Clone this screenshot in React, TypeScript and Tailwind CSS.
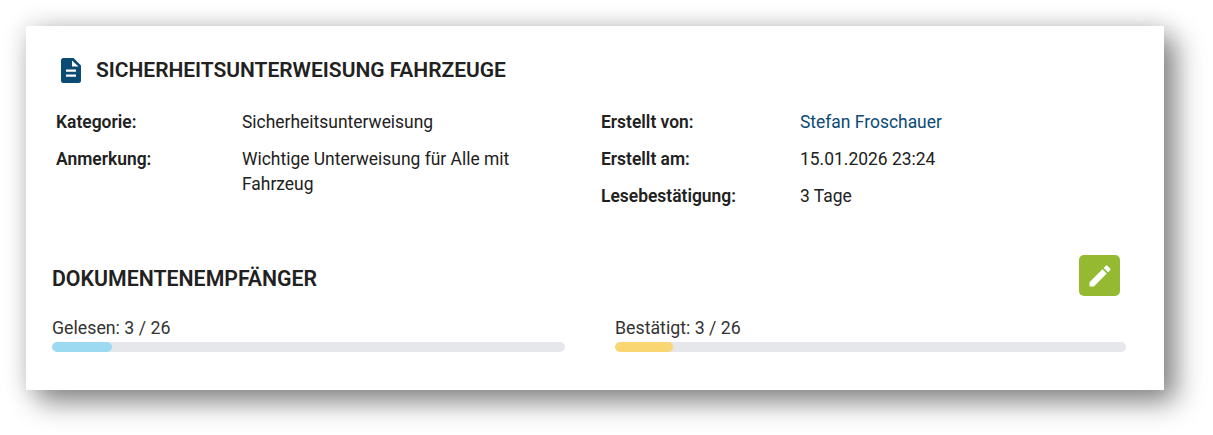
import React from "react";

function Row({ label, children, w, className = "" }: { label: string; children: React.ReactNode; w: string; className?: string }) {
  return (
    <div className={`flex ${className}`}>
      <div className={`${w} shrink-0 font-semibold`}>{label}</div>
      <div>{children}</div>
    </div>
  );
}

function Bar({ label, fill, w }: { label: string; fill: string; w: string }) {
  return (
    <div className={w}>
      <div className="h-[25px] leading-[25px] text-[17.75px] text-[#333]">{label}</div>
      <div className="h-[10px] rounded-full bg-[#e5e7eb] overflow-hidden mt-[1px]">
        <div className={`h-full rounded-full ${fill}`} />
      </div>
    </div>
  );
}

export default function App() {
  return (
    <div className="w-[1213px] h-[435px] bg-white pt-[26px] pl-[26px] overflow-hidden font-['Roboto',sans-serif] text-[17.45px] leading-[25px] text-[#212121]">
      <div className="w-[1138px] h-[364px] bg-white px-[26px] pt-[30px] shadow-[12px_12px_26px_rgba(0,0,0,0.45),0_0_24px_rgba(0,0,0,0.14)]">
        <div className="flex items-center h-[28px] ml-[9px] gap-[15px]">
          <svg viewBox="0 0 20 25" className="w-[20px] h-[25px] text-[#0b4a75]" fill="currentColor" fillRule="evenodd">
            <path d="M2.5 0H12.5L20 7.5V22.5A2.5 2.5 0 0 1 17.5 25H2.5A2.5 2.5 0 0 1 0 22.5V2.5A2.5 2.5 0 0 1 2.5 0ZM11 2.5V8.5H17.5ZM5 11.5V13.7H15V11.5ZM5 16.5V18.7H15V16.5Z" />
          </svg>
          <h1 className="text-[21px] font-semibold tracking-[-0.03px]">SICHERHEITSUNTERWEISUNG FAHRZEUGE</h1>
        </div>
        <div className="flex mt-[26px] ml-[4px]">
          <div className="w-[545px] flex flex-col gap-[12px]">
            <Row label="Kategorie:" w="w-[186px]">Sicherheitsunterweisung</Row>
            <Row label="Anmerkung:" w="w-[186px]">
              <div className="w-[290px]">Wichtige Unterweisung für Alle mit Fahrzeug</div>
            </Row>
          </div>
          <div className="flex flex-col gap-[12px]">
            <Row label="Erstellt von:" w="w-[199px]"><span className="text-[#0b4a75]">Stefan Froschauer</span></Row>
            <Row label="Erstellt am:" w="w-[199px]">15.01.2026 23:24</Row>
            <Row label="Lesebestätigung:" w="w-[199px]">3 Tage</Row>
          </div>
        </div>
        <div className="flex items-start justify-between mt-[46px] mr-[18px]">
          <h2 className="text-[21.3px] font-semibold pt-[11px]">DOKUMENTENEMPFÄNGER</h2>
          <button className="w-[41px] h-[41px] rounded-[5px] bg-[#95ba32] flex items-center justify-center">
            <svg viewBox="0 0 24 24" className="w-[28px] h-[28px] text-white" fill="currentColor">
              <path d="M3 17.25V21h3.75L17.81 9.94l-3.75-3.75L3 17.25zM20.71 7.04c.39-.39.39-1.02 0-1.41l-2.34-2.34c-.39-.39-1.02-.39-1.41 0l-1.83 1.83 3.75 3.75 1.83-1.83z" />
            </svg>
          </button>
        </div>
        <div className="flex gap-[50px] mt-[20px] w-[1074px]">
          <Bar label="Gelesen: 3 / 26" fill="w-[60px] bg-[#9bdaf0]" w="w-[513px]" />
          <Bar label="Bestätigt: 3 / 26" fill="w-[58px] bg-[#f9d672]" w="w-[511px]" />
        </div>
      </div>
    </div>
  );
}
